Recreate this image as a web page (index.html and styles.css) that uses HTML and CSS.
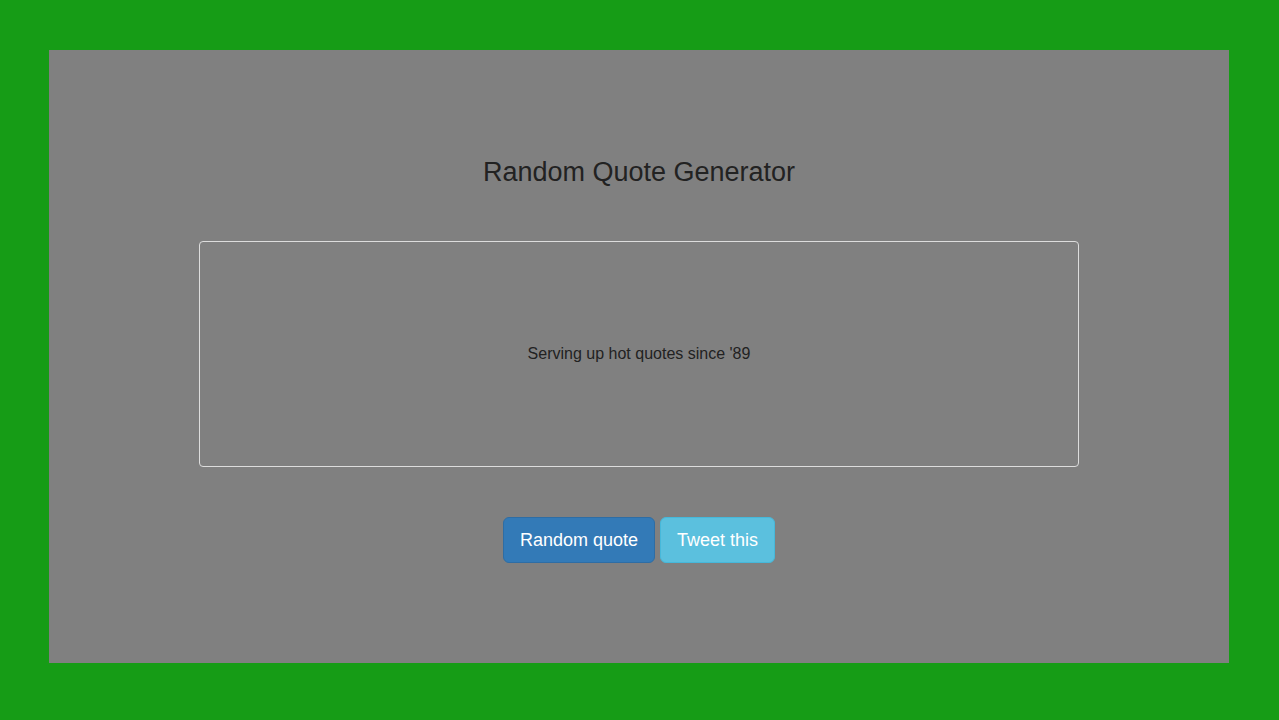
FILE: index.html
```html
<!DOCTYPE html>
<html>
<head>
<meta charset="utf-8">
<title>Random Quote Generator</title>
<link rel="stylesheet" href="styles.css">
</head>
<body>
<div class="panel">
  <h1 class="title">Random Quote Generator</h1>
  <div class="quote-box">
    <p class="quote">Serving up hot quotes since '89</p>
  </div>
  <div class="actions">
    <button class="btn btn-primary">Random quote</button>
    <button class="btn btn-info">Tweet this</button>
  </div>
</div>
</body>
</html>
```

FILE: styles.css
```css
html, body {
  margin: 0;
  padding: 0;
}
body {
  background: #169c16;
  font-family: "Liberation Sans", Arial, sans-serif;
  color: #222;
  padding: 50px 50px 57px 49px;
}
.panel {
  box-sizing: border-box;
  width: 1180px;
  height: 613px;
  background: #808080;
  padding: 108px 150px 0 150px;
  display: flex;
  flex-direction: column;
  align-items: center;
}
.title {
  margin: 0;
  font-size: 27px;
  line-height: 29px;
  font-weight: normal;
  color: #222;
}
.quote-box {
  box-sizing: border-box;
  margin-top: 54px;
  width: 880px;
  height: 226px;
  border: 1px solid #ddd;
  border-radius: 4px;
  display: flex;
  align-items: center;
  justify-content: center;
}
.quote {
  margin: 0;
  font-size: 16px;
  line-height: 22px;
  color: #222;
}
.actions {
  margin-top: 50px;
  display: flex;
  gap: 5px;
}
.btn {
  font-family: "Liberation Sans", Arial, sans-serif;
  font-size: 18px;
  line-height: 24px;
  padding: 10px 16px;
  border-radius: 6px;
  border: 1px solid transparent;
  color: #fff;
  cursor: pointer;
}
.btn-primary {
  background: #337ab7;
  border-color: #2e6da4;
}
.btn-info {
  background: #5bc0de;
  border-color: #46b8da;
}
```
